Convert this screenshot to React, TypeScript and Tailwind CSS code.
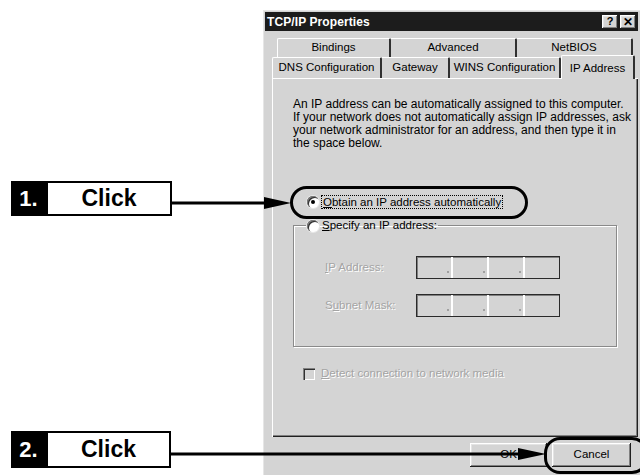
import React from "react";

const RAISED =
  "shadow-[inset_-1px_-1px_0_#202020,inset_1px_1px_0_#ffffff,inset_-2px_-2px_0_#808080,inset_2px_2px_0_#e4e4e4]";
const DIS = "text-[#a4a4a4] [text-shadow:1px_1px_0_#ffffff]";

function Radio({ checked }: { checked?: boolean }) {
  return (
    <span className="w-[12px] h-[12px] rounded-full bg-white shadow-[inset_1px_1px_0_#808080,inset_2px_2px_0_#303030,0_0_0_1px_#e8e8e8] flex items-center justify-center shrink-0">
      {checked && <span className="w-[4px] h-[4px] rounded-full bg-black" />}
    </span>
  );
}

function IpBox() {
  return (
    <div className="w-[144px] h-[23px] border border-[#2a2a2a] bg-[#d4d4d4] shadow-[inset_1px_1px_0_#808080] flex items-end">
      {[0, 1, 2, 3].map((i) => (
        <div key={i} className="flex-1 h-full flex items-end justify-end border-r-2 border-white last:border-r-0">
          {i < 3 && <span className="w-[2px] h-[2px] bg-[#a0a0a0] mb-[5px] mr-[2px]" />}
        </div>
      ))}
    </div>
  );
}

function Tab({ w, label, first }: { w: string; label: string; first?: boolean }) {
  return (
    <div
      className={`${w} h-full flex items-center justify-center border-t border-white border-r-2 border-r-[#303030] rounded-tr-[2px] ${first ? "border-l border-l-white rounded-tl-[2px]" : ""}`}
    >
      {label}
    </div>
  );
}

export default function App() {
  return (
    <div className="relative w-[640px] h-[475px] bg-white overflow-hidden font-['Liberation_Sans',Arial,sans-serif] text-[11.5px] text-black">
      {/* dialog */}
      <div className="ml-[263px] mt-[10px] w-[377px] h-[465px] bg-[#d4d4d4] border-l border-t border-[#e6e6e6] pl-[1px] pt-[1px] flex flex-col">
        <div className="h-[19px] mr-[2px] bg-[#1c1c1c] flex items-center justify-between pl-[2px] pr-[2px]">
          <span className="text-white font-bold text-[12px] tracking-[0.1px]">TCP/IP Properties</span>
          <div className="flex gap-[2px]">
            <span className={`w-[16px] h-[14px] bg-[#d4d4d4] ${RAISED} flex items-center justify-center font-bold text-[11px] leading-none`}>?</span>
            <span className={`w-[16px] h-[14px] bg-[#d4d4d4] ${RAISED} flex items-center justify-center font-bold text-[12px] leading-none`}>✕</span>
          </div>
        </div>

        {/* tabs */}
        <div className="mt-[7px] ml-[12px] h-[19px] flex">
          <Tab w="w-[114px]" label="Bindings" first />
          <Tab w="w-[126px]" label="Advanced" />
          <Tab w="w-[116px]" label="NetBIOS" />
        </div>
        <div className="ml-[7px] h-[21px] flex items-end relative z-10">
          <div className="h-[21px] flex">
            <Tab w="w-[110px]" label="DNS Configuration" first />
            <Tab w="w-[68px]" label="Gateway" />
            <Tab w="w-[111px]" label="WINS Configuration" />
          </div>
          <div className="w-[74px] h-[24px] mb-[-1px] bg-[#d4d4d4] flex items-start justify-center pt-[4px] border-t border-l border-white border-r-2 border-r-[#303030] rounded-t-[2px]">
            IP Address
          </div>
        </div>

        {/* panel */}
        <div className="ml-[7px] w-[366px] h-[359px] border-t border-l border-white shadow-[inset_-1px_-1px_0_#202020,inset_-2px_-2px_0_#808080] pl-[20px] flex flex-col">
          <p className="mt-[19px] text-[12px] leading-[13px] whitespace-nowrap">
            An IP address can be automatically assigned to this computer.
            <br />
            If your network does not automatically assign IP addresses, ask
            <br />
            your network administrator for an address, and then type it in
            <br />
            the space below.
          </p>

          <div className="mt-[45px] ml-[14px] flex items-center gap-[3px] h-[13px]">
            <Radio checked />
            <span className="outline-1 outline-dotted outline-black px-[1px] leading-[12px]">
              <span className="underline">O</span>btain an IP address automatically
            </span>
          </div>

          <fieldset className="mt-[9px] w-[324px] h-[130px] border border-[#8a8a8a] shadow-[1px_1px_0_#ffffff,inset_1px_1px_0_#ffffff] px-0 pb-0 pt-[0px]">
            <legend className="ml-[12px] px-[1px] flex items-center gap-[3px]">
              <Radio />
              <span>
                <span className="underline">S</span>pecify an IP address:
              </span>
            </legend>
            <div className="mt-[22px] ml-[31px] flex items-center">
              <span className={`w-[91px] ${DIS}`}>
                <span className="underline">I</span>P Address:
              </span>
              <IpBox />
            </div>
            <div className="mt-[15px] ml-[31px] flex items-center">
              <span className={`w-[91px] ${DIS}`}>
                S<span className="underline">u</span>bnet Mask:
              </span>
              <IpBox />
            </div>
          </fieldset>

          <div className="mt-[18px] ml-[10px] flex items-center gap-[6px]">
            <span className="w-[12px] h-[12px] bg-[#d4d4d4] shadow-[inset_1px_1px_0_#808080,inset_2px_2px_0_#303030,inset_-1px_-1px_0_#ffffff]" />
            <span className={DIS}>
              <span className="underline">D</span>etect connection to network media
            </span>
          </div>
        </div>

        {/* buttons */}
        <div className="mt-[6px] flex gap-[5px] pl-[205px]">
          <div className={`w-[77px] h-[24px] ${RAISED} flex items-center justify-center`}>OK</div>
          <div className={`w-[79px] h-[24px] ${RAISED} flex items-center justify-center`}>Cancel</div>
        </div>
      </div>

      {/* annotations */}
      <div className="absolute left-[11px] top-[181px] h-[35px] flex">
        <div className="w-[35px] bg-black text-white font-bold text-[22px] flex items-center justify-center">1.</div>
        <div className="w-[126px] border-2 border-black bg-white font-bold text-[23px] flex items-center justify-center">Click</div>
      </div>
      <div className="absolute left-[11px] top-[431px] h-[37px] flex">
        <div className="w-[35px] bg-black text-white font-bold text-[22px] flex items-center justify-center">2.</div>
        <div className="w-[125px] border-2 border-black bg-white font-bold text-[23px] flex items-center justify-center">Click</div>
      </div>

      <div className="absolute left-[290px] top-[186px] w-[238px] h-[33px] border-[3px] border-black rounded-full" />
      <div className="absolute left-[544px] top-[437px] w-[104px] h-[37px] border-[3px] border-black rounded-[16px]" />

      <svg className="absolute left-0 top-0" width="640" height="475">
        <line x1="171" y1="203" x2="268" y2="203" stroke="black" strokeWidth="3" />
        <polygon points="291,203 264,197 264,209" fill="black" />
        <line x1="170" y1="454" x2="522" y2="454" stroke="black" strokeWidth="3" />
        <polygon points="546,454 518,448 518,460" fill="black" />
      </svg>
    </div>
  );
}
